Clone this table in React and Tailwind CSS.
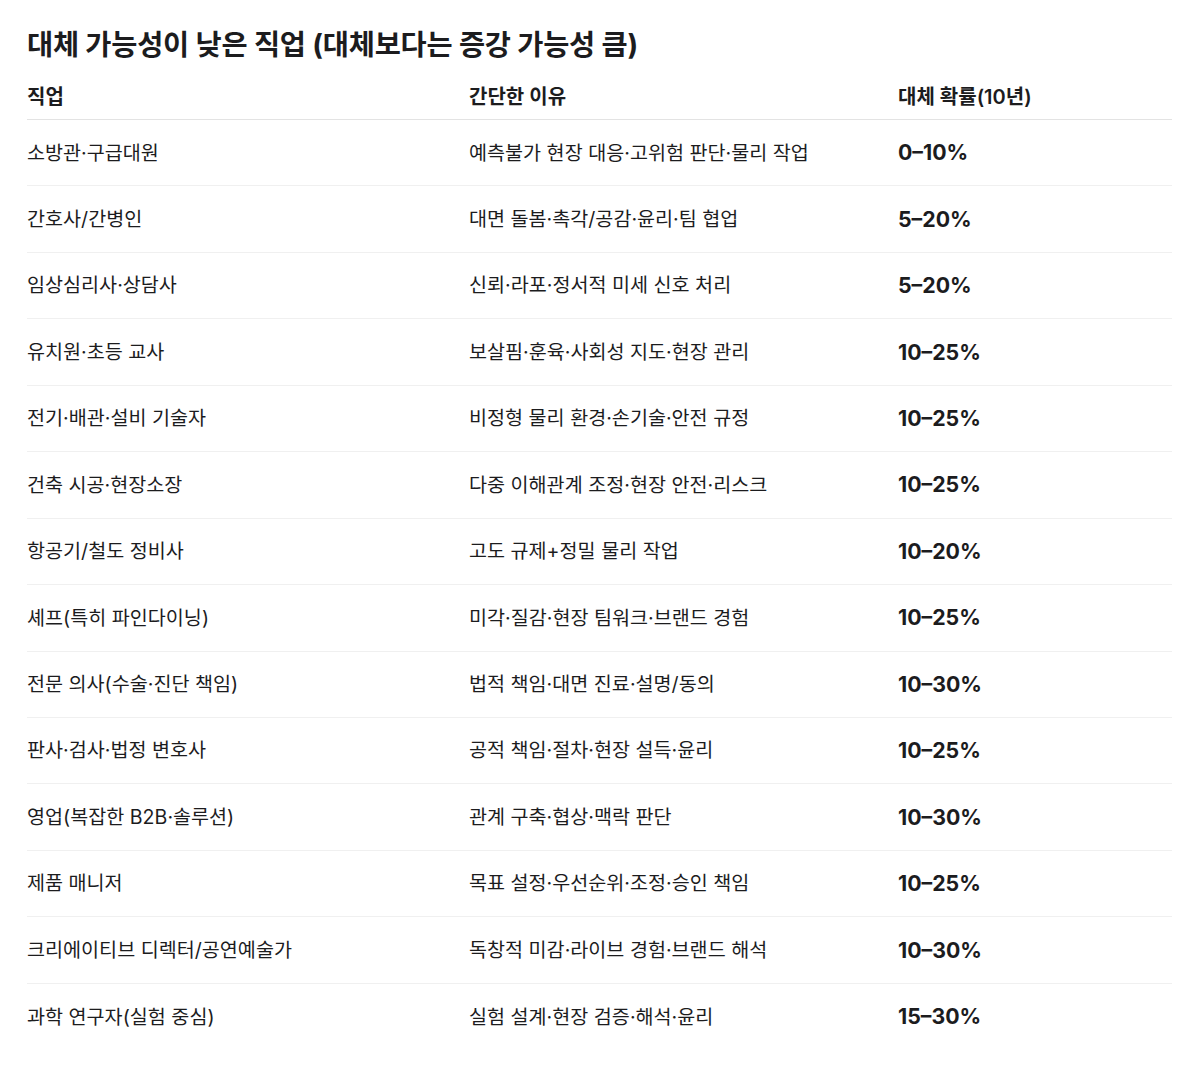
const rows = [
  ["소방관·구급대원", "예측불가 현장 대응·고위험 판단·물리 작업", "0–10%"],
  ["간호사/간병인", "대면 돌봄·촉각/공감·윤리·팀 협업", "5–20%"],
  ["임상심리사·상담사", "신뢰·라포·정서적 미세 신호 처리", "5–20%"],
  ["유치원·초등 교사", "보살핌·훈육·사회성 지도·현장 관리", "10–25%"],
  ["전기·배관·설비 기술자", "비정형 물리 환경·손기술·안전 규정", "10–25%"],
  ["건축 시공·현장소장", "다중 이해관계 조정·현장 안전·리스크", "10–25%"],
  ["항공기/철도 정비사", "고도 규제+정밀 물리 작업", "10–20%"],
  ["셰프(특히 파인다이닝)", "미각·질감·현장 팀워크·브랜드 경험", "10–25%"],
  ["전문 의사(수술·진단 책임)", "법적 책임·대면 진료·설명/동의", "10–30%"],
  ["판사·검사·법정 변호사", "공적 책임·절차·현장 설득·윤리", "10–25%"],
  ["영업(복잡한 B2B·솔루션)", "관계 구축·협상·맥락 판단", "10–30%"],
  ["제품 매니저", "목표 설정·우선순위·조정·승인 책임", "10–25%"],
  ["크리에이티브 디렉터/공연예술가", "독창적 미감·라이브 경험·브랜드 해석", "10–30%"],
  ["과학 연구자(실험 중심)", "실험 설계·현장 검증·해석·윤리", "15–30%"],
];

export default function App() {
  return (
    <div
      className="w-[1200px] h-[1069px] bg-white text-[#1c1c1e] overflow-hidden"
      style={{ fontFamily: 'Inter, "Noto Sans CJK KR", sans-serif' }}
    >
      <div className="pl-[27px] pr-[28px] pt-[26px]">
        <h1 className="text-[28.4px] font-bold leading-[38px] tracking-[-0.2px]">
          대체 가능성이 낮은 직업 (대체보다는 증강 가능성 큼)
        </h1>
        <div className="mt-[11px] grid grid-cols-[442px_429px_1fr] h-[45px] items-center border-b border-[#e3e3e3] text-[20px] font-semibold">
          <div>직업</div>
          <div>간단한 이유</div>
          <div>대체 확률(10년)</div>
        </div>
        {rows.map((r, i) => (
          <div
            key={i}
            className={
              "grid grid-cols-[442px_429px_1fr] h-[66.45px] items-center text-[19.6px] " +
              (i < rows.length - 1 ? "border-b border-[#f0f0f0]" : "")
            }
          >
            <div className="pt-[1px]">{r[0]}</div>
            <div className="pt-[1px]">{r[1]}</div>
            <div className="pt-[1px] font-bold text-[21.3px]">{r[2]}</div>
          </div>
        ))}
      </div>
    </div>
  );
}
